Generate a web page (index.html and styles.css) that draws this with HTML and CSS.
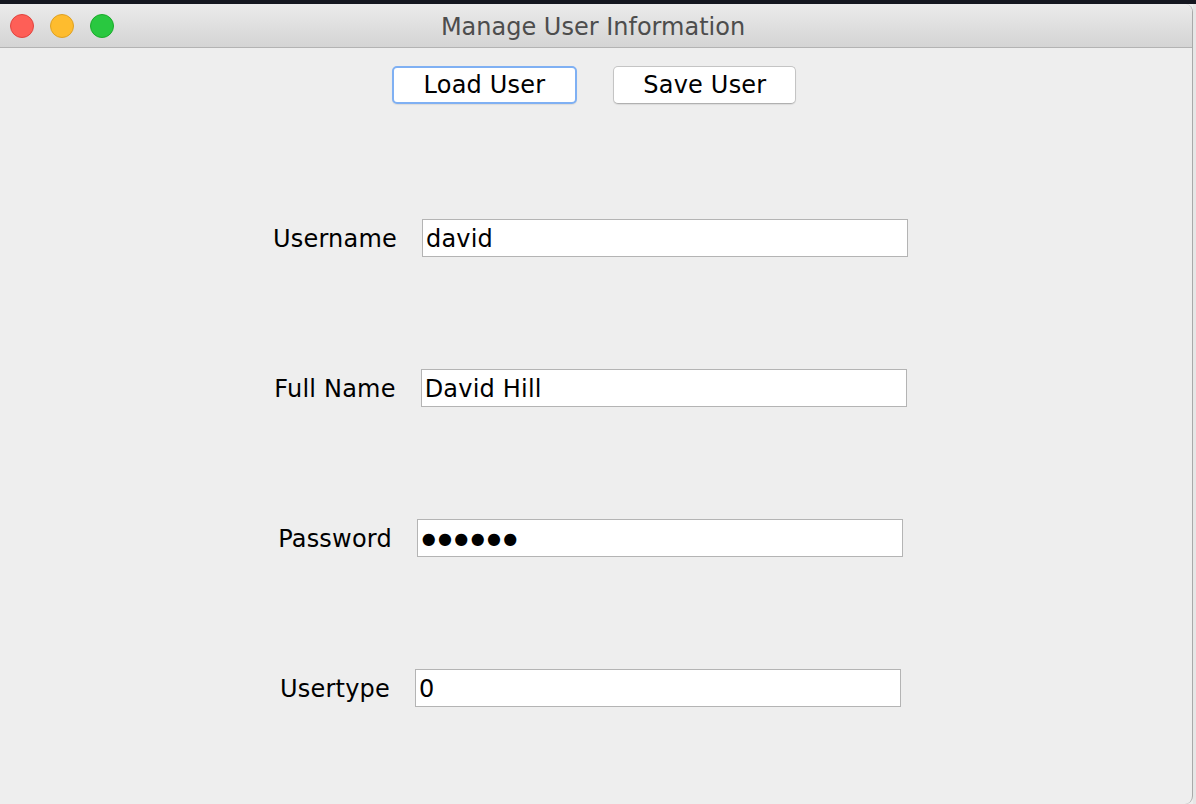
FILE: index.html
```html
<!DOCTYPE html>
<html>
<head>
<meta charset="utf-8">
<title>Manage User Information</title>
<link rel="stylesheet" href="styles.css">
</head>
<body>
<div class="screen">
  <div class="topstrip"></div>
  <div class="desk">
    <div class="window">
      <div class="titlebar">
        <div class="lights">
          <span class="light red"></span>
          <span class="light yellow"></span>
          <span class="light green"></span>
        </div>
        <div class="title">Manage User Information</div>
      </div>
      <div class="content">
        <div class="buttons">
          <button class="btn focused">Load User</button>
          <button class="btn">Save User</button>
        </div>
        <div class="rows">
          <div class="row"><label class="lbl">Username</label><div class="field">david</div></div>
          <div class="row"><label class="lbl">Full Name</label><div class="field">David Hill</div></div>
          <div class="row"><label class="lbl">Password</label><div class="field dots">●●●●●●</div></div>
          <div class="row"><label class="lbl">Usertype</label><div class="field">0</div></div>
        </div>
      </div>
    </div>
    <div class="edge"></div>
  </div>
</div>
</body>
</html>
```

FILE: styles.css
```css
* { box-sizing: border-box; }
html, body { margin: 0; padding: 0; }
body {
  width: 1196px;
  height: 804px;
  overflow: hidden;
  background: #eeeeee;
  font-family: "DejaVu Sans", "Liberation Sans", sans-serif;
}
.screen { display: flex; flex-direction: column; height: 804px; }
.topstrip { height: 4px; background: #14161f; flex: none; }
.desk { flex: 1; display: flex; }
.window {
  width: 1193px;
  height: 100%;
  background: #eeeeee;
  border-right: 1px solid #a9a9a9;
  border-radius: 0 8px 8px 0;
  display: flex;
  flex-direction: column;
  overflow: hidden;
}
.edge { flex: 1; background: #e6e6e6; }
.titlebar {
  height: 44px;
  flex: none;
  display: flex;
  align-items: center;
  position: relative;
  background: linear-gradient(#ebebeb, #d4d4d4);
  border-bottom: 1px solid #b3b3b3;
}
.lights { display: flex; gap: 16px; padding-left: 10px; }
.light { width: 24px; height: 24px; border-radius: 50%; display: block; }
.red { background: #fe5f57; border: 1px solid #e1443f; }
.yellow { background: #febc2e; border: 1px solid #dea123; }
.green { background: #29c840; border: 1px solid #1aab2a; }
.title {
  position: absolute;
  left: 0; right: 0; top: 0; bottom: 0;
  display: flex; align-items: center; justify-content: center;
  font-size: 24px;
  color: #4d4d4d;
  padding-right: 6px;
  padding-top: 2px;
}
.content { padding: 18px 11px 0 0; display: flex; flex-direction: column; }
.buttons { display: flex; justify-content: center; gap: 36px; padding-left: 7px; }
.btn {
  height: 38px;
  padding: 0 29px;
  font-family: inherit;
  font-size: 24px;
  letter-spacing: 0.2px;
  color: #000;
  background: #ffffff;
  border: 1px solid #c4c4c4;
  border-bottom-color: #b0b0b0;
  border-radius: 5px;
  box-shadow: 0 1px 1px rgba(0,0,0,0.08);
}
.btn.focused { border: 2px solid #7fb0f3; padding: 0 30px; }
.rows { display: flex; flex-direction: column; gap: 112px; margin-top: 115px; }
.row { display: flex; justify-content: center; align-items: center; gap: 25px; }
.lbl { font-size: 24px; letter-spacing: 0.2px; color: #000; padding-top: 2px; }
.field {
  width: 486px;
  height: 38px;
  background: #fff;
  border: 1px solid #b4b4b4;
  font-size: 24px;
  letter-spacing: 0.2px;
  color: #000;
  padding-left: 3px;
  padding-top: 1px;
  display: flex;
  align-items: center;
}
.dots { letter-spacing: 2.3px; font-size: 16px; padding-left: 4px; }
```
